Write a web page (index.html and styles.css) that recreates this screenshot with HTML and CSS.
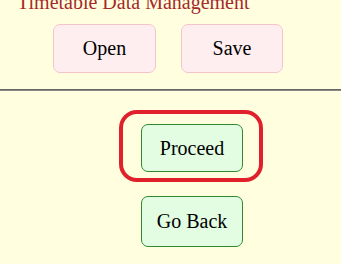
FILE: index.html
```html
<!DOCTYPE html>
<html>
<head>
<meta charset="utf-8">
<link rel="stylesheet" href="styles.css">
</head>
<body>
<div class="page">
  <h1 class="title">Timetable Data Management</h1>
  <div class="file-row">
    <button class="btn btn-file">Open</button>
    <button class="btn btn-file btn-save">Save</button>
  </div>
  <div class="divider"></div>
  <div class="actions">
    <div class="highlight-wrap">
      <button class="btn btn-go">Proceed</button>
      <span class="ring"></span>
    </div>
    <button class="btn btn-go btn-back">Go Back</button>
  </div>
</div>
</body>
</html>
```
FILE: styles.css
```css
html, body {
  margin: 0;
  padding: 0;
  background: #ffffe0;
  overflow: hidden;
}
.page {
  font-family: "Liberation Serif", "Times New Roman", serif;
}
.title {
  margin: -9px 0 0 17px;
  font-size: 20px;
  line-height: 23px;
  font-weight: normal;
  color: #a52a2a;
  white-space: nowrap;
}
.file-row {
  display: flex;
  gap: 25px;
  margin-top: 10px;
  padding-left: 53px;
}
.btn {
  box-sizing: border-box;
  width: 103px;
  height: 49px;
  font: 400 20px "Liberation Serif", serif;
  color: #000;
  border-radius: 7px;
  padding: 0;
}
.btn-file {
  background: #ffeef0;
  border: 1px solid #f5c4ca;
}
.btn-save {
  width: 102px;
}
.divider {
  margin-top: 16px;
  border-top: 1px solid #666;
  border-bottom: 1px solid #888;
}
.actions {
  display: flex;
  flex-direction: column;
  align-items: flex-start;
  gap: 24px;
  padding-left: 141px;
  margin-top: 33px;
}
.btn-go {
  width: 102px;
  height: 48px;
  background: #e2fde2;
  border: 1px solid #2f8a2f;
}
.btn-back {
  height: 51px;
}
.highlight-wrap {
  position: relative;
  display: flex;
}
.ring {
  position: absolute;
  left: -22px;
  top: -14px;
  width: 144px;
  height: 72px;
  box-sizing: border-box;
  border: 4px solid #e0202a;
  border-radius: 18px;
}
```
